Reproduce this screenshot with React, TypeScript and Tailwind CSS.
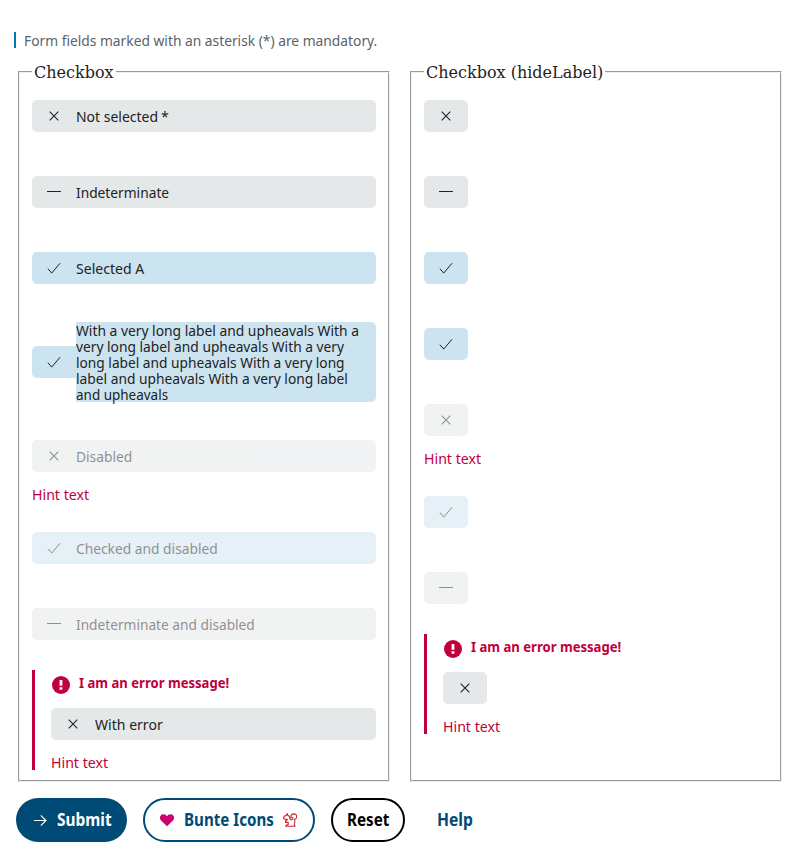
import { useLayoutEffect, useRef, useState } from 'react';
import type { ReactNode } from 'react';

type Mark = 'cross' | 'dash' | 'check';

/** Single line of text, condensed horizontally so that it spans `width` pixels. */
function Line({ children, width }: { children: string; width: number }) {
  const ref = useRef<HTMLSpanElement>(null);
  const [scale, setScale] = useState(1);
  useLayoutEffect(() => {
    if (ref.current) {
      setScale(width / ref.current.offsetWidth);
    }
  }, []);
  return (
    <span className="block text-left whitespace-nowrap" style={{ width }}>
      <span ref={ref} className="inline-block origin-left align-top" style={{ transform: `scaleX(${scale})` }}>
        {children}
      </span>
    </span>
  );
}

function MarkIcon({ mark }: { mark: Mark }) {
  return (
    <svg width="16" height="16" viewBox="0 0 16 16" fill="none" stroke="currentColor" strokeWidth="1.1">
      {mark === 'cross' && <path d="M3.7 3.7l8.6 8.6M12.3 3.7l-8.6 8.6" />}
      {mark === 'dash' && <path d="M1 7.5h14" strokeWidth="1" />}
      {mark === 'check' && <path d="M1.9 8.7l3.8 4.4L14.1 3.2" strokeWidth="1" />}
    </svg>
  );
}

interface BoxProps {
  mark: Mark;
  label?: ReactNode;
  disabled?: boolean;
  tall?: boolean;
}

function Checkbox({ mark, label, disabled, tall }: BoxProps) {
  const bg = mark === 'check' ? 'bg-[#cce4f0]' : 'bg-[#e4e8e9]';
  const fade = disabled ? 'opacity-50' : '';
  return (
    <label className={`flex items-center text-[#1e2223] ${fade}`}>
      <span className={`flex h-8 w-11 shrink-0 items-center justify-center ${bg} ${label ? 'rounded-l-[5px]' : 'rounded-[5px]'}`}>
        <MarkIcon mark={mark} />
      </span>
      {label && (
        <span className={`flex flex-1 flex-col items-start justify-center rounded-r-[5px] leading-4 ${bg} ${tall ? 'h-20' : 'h-8'}`}>
          {label}
        </span>
      )}
    </label>
  );
}

function Hint() {
  return (
    <div className="mt-3.5 h-4 leading-4 text-[#c0003c]">
      <Line width={57.5}>Hint text</Line>
    </div>
  );
}

function ErrorBlock({ children }: { children: ReactNode }) {
  return (
    <div className="h-[100px] border-l-3 border-[#c0003c] pl-4">
      <div className="flex h-[38px] gap-[9px] pt-1.5 pl-px font-bold text-[#c0003c]">
        <svg width="18" height="18" viewBox="0 0 18 18" className="shrink-0">
          <circle cx="9" cy="9" r="9" fill="currentColor" />
          <path d="M7.6 4h2.8v5.8H7.6zM7.6 11.2h2.8v2.6H7.6z" fill="white" />
        </svg>
        <span className="-mt-0.5 leading-4">
          <Line width={150}>I am an error message!</Line>
        </span>
      </div>
      {children}
      <Hint />
    </div>
  );
}

function Group({ title, children }: { title: string; children: ReactNode }) {
  return (
    <fieldset className="h-[719px] w-[372px] border-2 border-[threedface] px-3 [border-style:groove]">
      <legend className="h-[18px] px-0.5 font-['DejaVu_Serif',serif] text-base leading-[19px] text-[#1e2223]">{title}</legend>
      <div className="pt-[19px]">{children}</div>
    </fieldset>
  );
}

function Squirrel() {
  return (
    <svg width="16" height="16" viewBox="-1 -1 16 16" fill="none" stroke="#c6262c" strokeWidth="1.1" strokeLinejoin="round">
      <path d="M4.5 .7V2.200Q7 2.800 6.700 5.200L7.600 6.600Q10 7 10 4.800L8 4.500Q7.500 .9 10.800 .9Q13.800 .9 13.600 4Q13.400 6 11.500 6.600Q12.500 9 11.200 11.200L12 13.200H2.800Q2.700 11.600 5.200 11.600V9.200L2.500 9.400V7.800L4.200 7V6.200Q.6 6.600 .5 4.600Q1 3 3 2.400Z" />
    </svg>
  );
}

const longLines: [string, number][] = [
  ['With a very long label and upheavals With a', 283],
  ['very long label and upheavals With a very', 268],
  ['long label and upheavals With a very long', 269],
  ['label and upheavals With a very long label', 272],
  ['and upheavals', 92.5],
];

export default function App() {
  return (
    <main className="h-[858px] w-[800px] overflow-hidden bg-white pt-8 font-['Noto_Sans',sans-serif] text-[15px]">
      <div className="ml-3.5 flex h-4 border-l-2 border-[#0077b6] pl-2 leading-[17px] text-[#5a6367]">
        <Line width={353}>Form fields marked with an asterisk (*) are mandatory.</Line>
      </div>
      <div className="mt-[15px] ml-[18px] flex gap-5">
        <Group title="Checkbox">
          <Checkbox
            mark="cross"
            label={
              <span className="flex gap-[3px]">
                <Line width={82}>Not selected</Line>
                <Line width={7.5}>*</Line>
              </span>
            }
          />
          <div className="mt-11">
            <Checkbox mark="dash" label={<Line width={93.5}>Indeterminate</Line>} />
          </div>
          <div className="mt-11">
            <Checkbox mark="check" label={<Line width={68.5}>Selected A</Line>} />
          </div>
          <div className="mt-[38px]">
            <Checkbox
              mark="check"
              tall
              label={longLines.map(([text, width]) => (
                <Line key={text} width={width}>{text}</Line>
              ))}
            />
          </div>
          <div className="mt-[38px] h-[92px]">
            <Checkbox mark="cross" disabled label={<Line width={56}>Disabled</Line>} />
            <Hint />
          </div>
          <Checkbox mark="check" disabled label={<Line width={141.5}>Checked and disabled</Line>} />
          <div className="mt-11">
            <Checkbox mark="dash" disabled label={<Line width={179}>Indeterminate and disabled</Line>} />
          </div>
          <div className="mt-[30px]">
            <ErrorBlock>
              <Checkbox mark="cross" label={<Line width={67.5}>With error</Line>} />
            </ErrorBlock>
          </div>
        </Group>
        <Group title="Checkbox (hideLabel)">
          <div className="flex flex-col gap-11">
            <Checkbox mark="cross" />
            <Checkbox mark="dash" />
            <Checkbox mark="check" />
            <Checkbox mark="check" />
          </div>
          <div className="mt-11 h-[92px]">
            <Checkbox mark="cross" disabled />
            <Hint />
          </div>
          <div className="flex flex-col gap-11">
            <Checkbox mark="check" disabled />
            <Checkbox mark="dash" disabled />
          </div>
          <div className="mt-[30px]">
            <ErrorBlock>
              <Checkbox mark="cross" />
            </ErrorBlock>
          </div>
        </Group>
      </div>
      <div className="mt-4 ml-4 flex gap-4 text-[17px] font-bold text-[#004b76]">
        <button className="flex h-11 w-[111px] items-center gap-[9px] rounded-full bg-[#004b76] pl-4 text-white">
          <svg width="16" height="16" viewBox="0 0 16 16" fill="none" stroke="currentColor" strokeWidth="1.1">
            <path d="M2 8.5h12M8.8 3.3l5.200 5.200-5.200 5.200" />
          </svg>
          <Line width={54.5}>Submit</Line>
        </button>
        <button className="flex h-11 w-[172px] items-center rounded-full border-2 border-[#004b76] pl-3.5">
          <svg width="16" height="16" viewBox="0 0 16 16" fill="#cc0070">
            <path d="M8 14.200L2 8.600C-.2 6 1.200 2.400 4.200 2.200 5.800 2.100 7.200 2.900 8 4.200c.8-1.300 2.200-2.100 3.800-2 3 .2 4.400 3.800 2.200 6.400z" />
          </svg>
          <span className="mr-2 ml-[9px]">
            <Line width={90}>Bunte Icons</Line>
          </span>
          <Squirrel />
        </button>
        <button className="h-11 w-[74px] rounded-full border-2 border-black pl-3.5 text-left text-black">
          <Line width={42}>Reset</Line>
        </button>
        <button className="h-11 pl-4">
          <Line width={36}>Help</Line>
        </button>
      </div>
    </main>
  );
}
